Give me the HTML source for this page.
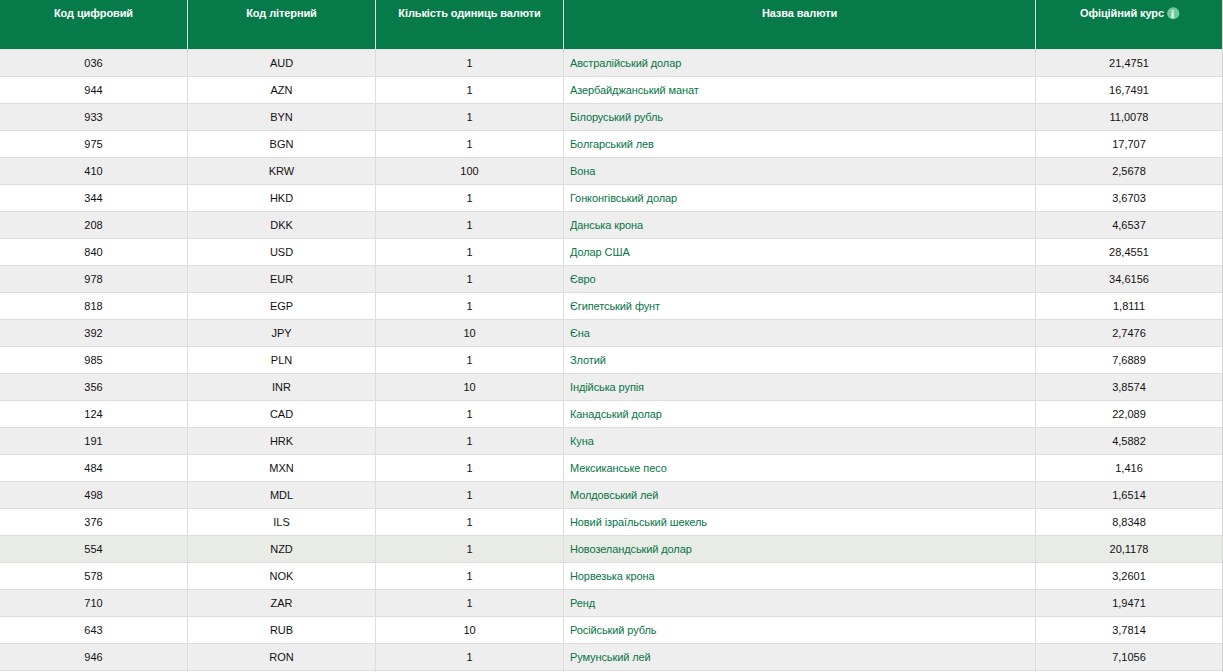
<!DOCTYPE html><html><head><meta charset="utf-8"><style>
html,body{margin:0;padding:0;}
body{width:1223px;height:672px;overflow:hidden;background:#fff;position:relative;font-family:"Liberation Sans",sans-serif;font-size:11px;}
.hd{position:absolute;left:0;top:0;width:1222px;height:49px;background:#067a48;}
.hrc{position:absolute;left:1222px;top:0;width:1px;height:49px;background:#dcdcdc;}
.hv{position:absolute;top:0;width:1px;height:49px;background:#ddd;}
.ht{position:absolute;letter-spacing:-0.1px;top:7px;color:#fff;font-weight:bold;text-align:center;line-height:13px;white-space:nowrap;}
.r{position:absolute;left:0;width:1222px;}
.odd{background:#eeeeee;}
.hl{background:#e9ebe6;}
.hb{position:absolute;left:0;width:1223px;height:1px;background:#dddddd;}
.bv{position:absolute;width:1px;background:#dddddd;}
.c{position:absolute;color:#111;text-align:center;line-height:13px;white-space:nowrap;}
.n{position:absolute;letter-spacing:-0.1px;color:#077545;line-height:13px;white-space:nowrap;}
.info{position:absolute;width:11px;height:11px;border-radius:50%;background:#72c99b;color:#067a48;font-size:9px;line-height:11px;text-align:center;font-weight:bold;}
</style></head><body><div class="hd"></div><div class="hrc"></div>
<div class="hv" style="left:187px"></div>
<div class="hv" style="left:375px"></div>
<div class="hv" style="left:563px"></div>
<div class="hv" style="left:1035px"></div>
<div class="ht" style="left:0px;width:187px">Код цифровий</div>
<div class="ht" style="left:188px;width:187px">Код літерний</div>
<div class="ht" style="left:376px;width:187px">Кількість одиниць валюти</div>
<div class="ht" style="left:564px;width:471px">Назва валюти</div>
<div class="ht" style="left:1036px;width:186px"><span style="padding-right:14px">Офіційний курс</span></div>
<svg style="position:absolute;left:1167px;top:7px" width="13" height="13" viewBox="0 0 13 13"><circle cx="6.25" cy="6.25" r="6.1" fill="#72c99b"/><rect x="4.6" y="3.1" width="2" height="1.3" fill="#fff"/><rect x="4.6" y="5.2" width="2" height="6" fill="#fff"/></svg>
<div class="r odd" style="top:49px;height:27px"></div>
<div class="c" style="left:0px;width:187px;top:57px">036</div>
<div class="c" style="left:188px;width:187px;top:57px">AUD</div>
<div class="c" style="left:376px;width:187px;top:57px">1</div>
<div class="n" style="left:570px;top:57px">Австралійський долар</div>
<div class="c" style="left:1036px;width:186px;top:57px">21,4751</div>
<div class="hb" style="top:76px"></div>
<div class="r" style="top:77px;height:26px"></div>
<div class="c" style="left:0px;width:187px;top:84px">944</div>
<div class="c" style="left:188px;width:187px;top:84px">AZN</div>
<div class="c" style="left:376px;width:187px;top:84px">1</div>
<div class="n" style="left:570px;top:84px">Азербайджанський манат</div>
<div class="c" style="left:1036px;width:186px;top:84px">16,7491</div>
<div class="hb" style="top:103px"></div>
<div class="r odd" style="top:104px;height:26px"></div>
<div class="c" style="left:0px;width:187px;top:111px">933</div>
<div class="c" style="left:188px;width:187px;top:111px">BYN</div>
<div class="c" style="left:376px;width:187px;top:111px">1</div>
<div class="n" style="left:570px;top:111px">Білоруський рубль</div>
<div class="c" style="left:1036px;width:186px;top:111px">11,0078</div>
<div class="hb" style="top:130px"></div>
<div class="r" style="top:131px;height:26px"></div>
<div class="c" style="left:0px;width:187px;top:138px">975</div>
<div class="c" style="left:188px;width:187px;top:138px">BGN</div>
<div class="c" style="left:376px;width:187px;top:138px">1</div>
<div class="n" style="left:570px;top:138px">Болгарський лев</div>
<div class="c" style="left:1036px;width:186px;top:138px">17,707</div>
<div class="hb" style="top:157px"></div>
<div class="r odd" style="top:158px;height:26px"></div>
<div class="c" style="left:0px;width:187px;top:165px">410</div>
<div class="c" style="left:188px;width:187px;top:165px">KRW</div>
<div class="c" style="left:376px;width:187px;top:165px">100</div>
<div class="n" style="left:570px;top:165px">Вона</div>
<div class="c" style="left:1036px;width:186px;top:165px">2,5678</div>
<div class="hb" style="top:184px"></div>
<div class="r" style="top:185px;height:26px"></div>
<div class="c" style="left:0px;width:187px;top:192px">344</div>
<div class="c" style="left:188px;width:187px;top:192px">HKD</div>
<div class="c" style="left:376px;width:187px;top:192px">1</div>
<div class="n" style="left:570px;top:192px">Гонконгівський долар</div>
<div class="c" style="left:1036px;width:186px;top:192px">3,6703</div>
<div class="hb" style="top:211px"></div>
<div class="r odd" style="top:212px;height:26px"></div>
<div class="c" style="left:0px;width:187px;top:219px">208</div>
<div class="c" style="left:188px;width:187px;top:219px">DKK</div>
<div class="c" style="left:376px;width:187px;top:219px">1</div>
<div class="n" style="left:570px;top:219px">Данська крона</div>
<div class="c" style="left:1036px;width:186px;top:219px">4,6537</div>
<div class="hb" style="top:238px"></div>
<div class="r" style="top:239px;height:26px"></div>
<div class="c" style="left:0px;width:187px;top:246px">840</div>
<div class="c" style="left:188px;width:187px;top:246px">USD</div>
<div class="c" style="left:376px;width:187px;top:246px">1</div>
<div class="n" style="left:570px;top:246px">Долар США</div>
<div class="c" style="left:1036px;width:186px;top:246px">28,4551</div>
<div class="hb" style="top:265px"></div>
<div class="r odd" style="top:266px;height:26px"></div>
<div class="c" style="left:0px;width:187px;top:273px">978</div>
<div class="c" style="left:188px;width:187px;top:273px">EUR</div>
<div class="c" style="left:376px;width:187px;top:273px">1</div>
<div class="n" style="left:570px;top:273px">Євро</div>
<div class="c" style="left:1036px;width:186px;top:273px">34,6156</div>
<div class="hb" style="top:292px"></div>
<div class="r" style="top:293px;height:26px"></div>
<div class="c" style="left:0px;width:187px;top:300px">818</div>
<div class="c" style="left:188px;width:187px;top:300px">EGP</div>
<div class="c" style="left:376px;width:187px;top:300px">1</div>
<div class="n" style="left:570px;top:300px">Єгипетський фунт</div>
<div class="c" style="left:1036px;width:186px;top:300px">1,8111</div>
<div class="hb" style="top:319px"></div>
<div class="r odd" style="top:320px;height:26px"></div>
<div class="c" style="left:0px;width:187px;top:327px">392</div>
<div class="c" style="left:188px;width:187px;top:327px">JPY</div>
<div class="c" style="left:376px;width:187px;top:327px">10</div>
<div class="n" style="left:570px;top:327px">Єна</div>
<div class="c" style="left:1036px;width:186px;top:327px">2,7476</div>
<div class="hb" style="top:346px"></div>
<div class="r" style="top:347px;height:26px"></div>
<div class="c" style="left:0px;width:187px;top:354px">985</div>
<div class="c" style="left:188px;width:187px;top:354px">PLN</div>
<div class="c" style="left:376px;width:187px;top:354px">1</div>
<div class="n" style="left:570px;top:354px">Злотий</div>
<div class="c" style="left:1036px;width:186px;top:354px">7,6889</div>
<div class="hb" style="top:373px"></div>
<div class="r odd" style="top:374px;height:26px"></div>
<div class="c" style="left:0px;width:187px;top:381px">356</div>
<div class="c" style="left:188px;width:187px;top:381px">INR</div>
<div class="c" style="left:376px;width:187px;top:381px">10</div>
<div class="n" style="left:570px;top:381px">Індійська рупія</div>
<div class="c" style="left:1036px;width:186px;top:381px">3,8574</div>
<div class="hb" style="top:400px"></div>
<div class="r" style="top:401px;height:26px"></div>
<div class="c" style="left:0px;width:187px;top:408px">124</div>
<div class="c" style="left:188px;width:187px;top:408px">CAD</div>
<div class="c" style="left:376px;width:187px;top:408px">1</div>
<div class="n" style="left:570px;top:408px">Канадський долар</div>
<div class="c" style="left:1036px;width:186px;top:408px">22,089</div>
<div class="hb" style="top:427px"></div>
<div class="r odd" style="top:428px;height:26px"></div>
<div class="c" style="left:0px;width:187px;top:435px">191</div>
<div class="c" style="left:188px;width:187px;top:435px">HRK</div>
<div class="c" style="left:376px;width:187px;top:435px">1</div>
<div class="n" style="left:570px;top:435px">Куна</div>
<div class="c" style="left:1036px;width:186px;top:435px">4,5882</div>
<div class="hb" style="top:454px"></div>
<div class="r" style="top:455px;height:26px"></div>
<div class="c" style="left:0px;width:187px;top:462px">484</div>
<div class="c" style="left:188px;width:187px;top:462px">MXN</div>
<div class="c" style="left:376px;width:187px;top:462px">1</div>
<div class="n" style="left:570px;top:462px">Мексиканське песо</div>
<div class="c" style="left:1036px;width:186px;top:462px">1,416</div>
<div class="hb" style="top:481px"></div>
<div class="r odd" style="top:482px;height:26px"></div>
<div class="c" style="left:0px;width:187px;top:489px">498</div>
<div class="c" style="left:188px;width:187px;top:489px">MDL</div>
<div class="c" style="left:376px;width:187px;top:489px">1</div>
<div class="n" style="left:570px;top:489px">Молдовський лей</div>
<div class="c" style="left:1036px;width:186px;top:489px">1,6514</div>
<div class="hb" style="top:508px"></div>
<div class="r" style="top:509px;height:26px"></div>
<div class="c" style="left:0px;width:187px;top:516px">376</div>
<div class="c" style="left:188px;width:187px;top:516px">ILS</div>
<div class="c" style="left:376px;width:187px;top:516px">1</div>
<div class="n" style="left:570px;top:516px">Новий ізраїльський шекель</div>
<div class="c" style="left:1036px;width:186px;top:516px">8,8348</div>
<div class="hb" style="top:535px"></div>
<div class="r hl" style="top:536px;height:26px"></div>
<div class="c" style="left:0px;width:187px;top:543px">554</div>
<div class="c" style="left:188px;width:187px;top:543px">NZD</div>
<div class="c" style="left:376px;width:187px;top:543px">1</div>
<div class="n" style="left:570px;top:543px">Новозеландський долар</div>
<div class="c" style="left:1036px;width:186px;top:543px">20,1178</div>
<div class="hb" style="top:562px"></div>
<div class="r" style="top:563px;height:26px"></div>
<div class="c" style="left:0px;width:187px;top:570px">578</div>
<div class="c" style="left:188px;width:187px;top:570px">NOK</div>
<div class="c" style="left:376px;width:187px;top:570px">1</div>
<div class="n" style="left:570px;top:570px">Норвезька крона</div>
<div class="c" style="left:1036px;width:186px;top:570px">3,2601</div>
<div class="hb" style="top:589px"></div>
<div class="r odd" style="top:590px;height:26px"></div>
<div class="c" style="left:0px;width:187px;top:597px">710</div>
<div class="c" style="left:188px;width:187px;top:597px">ZAR</div>
<div class="c" style="left:376px;width:187px;top:597px">1</div>
<div class="n" style="left:570px;top:597px">Ренд</div>
<div class="c" style="left:1036px;width:186px;top:597px">1,9471</div>
<div class="hb" style="top:616px"></div>
<div class="r" style="top:617px;height:26px"></div>
<div class="c" style="left:0px;width:187px;top:624px">643</div>
<div class="c" style="left:188px;width:187px;top:624px">RUB</div>
<div class="c" style="left:376px;width:187px;top:624px">10</div>
<div class="n" style="left:570px;top:624px">Російський рубль</div>
<div class="c" style="left:1036px;width:186px;top:624px">3,7814</div>
<div class="hb" style="top:643px"></div>
<div class="r odd" style="top:644px;height:26px"></div>
<div class="c" style="left:0px;width:187px;top:651px">946</div>
<div class="c" style="left:188px;width:187px;top:651px">RON</div>
<div class="c" style="left:376px;width:187px;top:651px">1</div>
<div class="n" style="left:570px;top:651px">Румунський лей</div>
<div class="c" style="left:1036px;width:186px;top:651px">7,1056</div>
<div class="hb" style="top:670px"></div>
<div class="r" style="top:671px;height:26px"></div>
<div class="c" style="left:0px;width:187px;top:678px">999</div>
<div class="c" style="left:188px;width:187px;top:678px">XXX</div>
<div class="c" style="left:376px;width:187px;top:678px">1</div>
<div class="n" style="left:570px;top:678px">Сербський динар</div>
<div class="c" style="left:1036px;width:186px;top:678px">0,1</div>
<div class="hb" style="top:697px"></div>
<div class="hb" style="top:49px;background:#e4e4e4"></div>
<div class="bv" style="left:187px;top:49px;height:630px;background:#dddddd"></div>
<div class="bv" style="left:375px;top:49px;height:630px;background:#dddddd"></div>
<div class="bv" style="left:563px;top:49px;height:630px;background:#dddddd"></div>
<div class="bv" style="left:1035px;top:49px;height:630px;background:#dddddd"></div>
<div class="bv" style="left:1222px;top:49px;height:630px;background:#d4d4d4"></div></body></html>
